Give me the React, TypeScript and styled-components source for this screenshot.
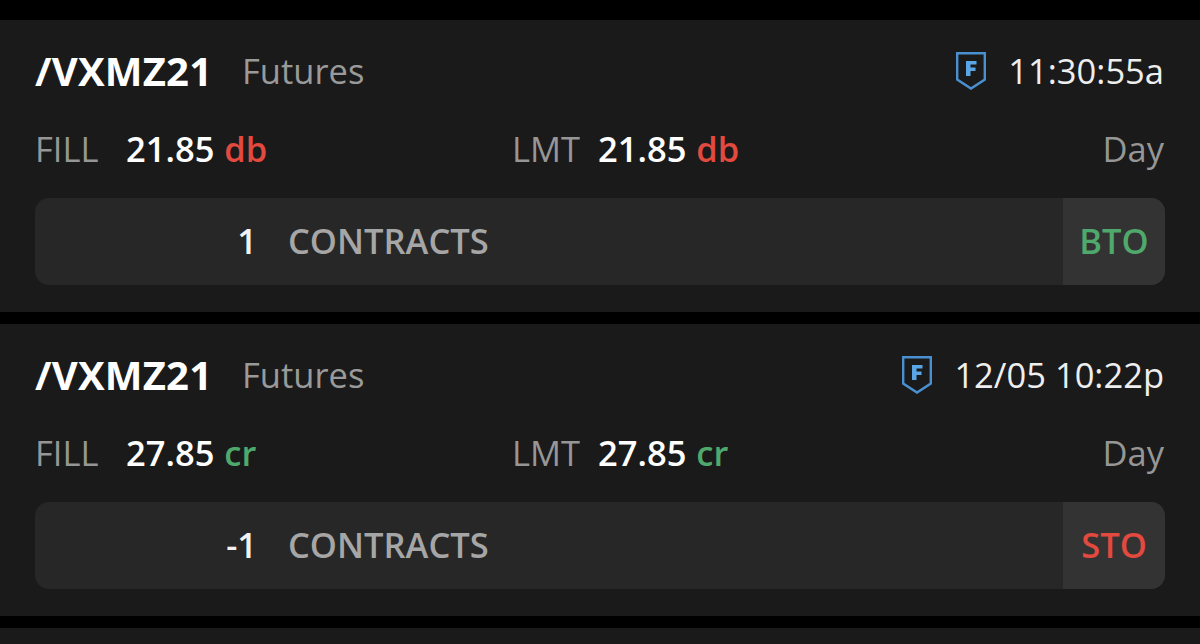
import styled, { createGlobalStyle } from "styled-components";

const Global = createGlobalStyle`
  html, body {
    margin: 0;
    padding: 0;
    background: #000;
    height: 644px;
    overflow: hidden;
  }
`;

const List = styled.div`
  height: 644px;
  box-sizing: border-box;
  overflow: hidden;
  display: flex;
  flex-direction: column;
  gap: 12px;
  padding-top: 20px;
  font-family: "Open Sans", sans-serif;
`;

const Card = styled.section`
  flex: none;
  height: 292px;
  box-sizing: border-box;
  background: #1a1a1a;
  padding: 0 35px;
`;

const Header = styled.div`
  height: 100px;
  display: flex;
  align-items: center;
`;

const Symbol = styled.span`
  font-size: 40px;
  font-weight: 700;
  color: #fff;
  letter-spacing: 0.2px;
  width: 207px;
`;

const Kind = styled.span`
  font-size: 34.5px;
  color: #9a9a9a;
`;

const Time = styled.div`
  margin-left: auto;
  margin-right: 1px;
  display: flex;
  align-items: center;
  gap: 22px;
  font-size: 34.5px;
  color: #eee;

  svg {
    margin-top: 2px;
  }
`;

const Prices = styled.div`
  height: 56px;
  padding-right: 1px;
  display: grid;
  grid-template-columns: 477px 1fr auto;
  align-items: center;
  font-size: 34.5px;
  color: #969696;
`;

const Price = styled.div`
  display: flex;
  align-items: baseline;
`;

const PriceLabel = styled.span<{ $width: number }>`
  width: ${(p) => p.$width}px;
`;

const Value = styled.span`
  color: #fff;
  font-weight: 600;
  font-size: 34.5px;
  margin-right: 10px;
`;

const Unit = styled.span<{ $color: string }>`
  color: ${(p) => p.$color};
  font-weight: 600;
  font-size: 34.5px;
`;

const Pill = styled.div`
  margin-top: 22px;
  height: 87px;
  display: flex;
  align-items: center;
  background: #272727;
  border-radius: 14px;
  overflow: hidden;
`;

const Count = styled.span`
  width: 222px;
  padding-bottom: 2px;
  text-align: right;
  font-size: 34.5px;
  font-weight: 600;
  color: #f2f2f2;
`;

const Unitless = styled.span`
  margin-left: 31px;
  padding-bottom: 2px;
  font-size: 34.5px;
  font-weight: 600;
  color: #a6a6a6;
`;

const Badge = styled.div<{ $color: string }>`
  margin-left: auto;
  width: 102px;
  height: 100%;
  box-sizing: border-box;
  padding-bottom: 2px;
  display: flex;
  align-items: center;
  justify-content: center;
  background: #333;
  font-size: 34.5px;
  font-weight: 600;
  color: ${(p) => p.$color};
`;

const RED = "#e2493f";
const GREEN = "#4fa86c";

const ShieldIcon = () => (
  <svg width="30" height="38" viewBox="0 0 30 38" fill="none">
    <path d="M1.200 1.200H28.800V27.500L15 36.500L1.200 27.500Z" stroke="#4a90d0" strokeWidth="2.400" />
    <path d="M10 9H20.500V12.500H14.500V15.500H19.500V19H14.500V24H10Z" fill="#5aa5e6" />
  </svg>
);

type Order = {
  time: string;
  price: string;
  unit: string;
  unitColor: string;
  count: string;
  action: string;
  actionColor: string;
};

const orders: Order[] = [
  { time: "11:30:55a", price: "21.85", unit: "db", unitColor: RED, count: "1", action: "BTO", actionColor: GREEN },
  { time: "12/05 10:22p", price: "27.85", unit: "cr", unitColor: GREEN, count: "-1", action: "STO", actionColor: RED },
];

export default function App() {
  return (
    <List>
      <Global />
      {orders.map((o) => (
        <Card key={o.time}>
          <Header>
            <Symbol>/VXMZ21</Symbol>
            <Kind>Futures</Kind>
            <Time>
              <ShieldIcon />
              {o.time}
            </Time>
          </Header>
          <Prices>
            <Price>
              <PriceLabel $width={91}>FILL</PriceLabel>
              <Value>{o.price}</Value>
              <Unit $color={o.unitColor}>{o.unit}</Unit>
            </Price>
            <Price>
              <PriceLabel $width={86}>LMT</PriceLabel>
              <Value>{o.price}</Value>
              <Unit $color={o.unitColor}>{o.unit}</Unit>
            </Price>
            <span>Day</span>
          </Prices>
          <Pill>
            <Count>{o.count}</Count>
            <Unitless>CONTRACTS</Unitless>
            <Badge $color={o.actionColor}>{o.action}</Badge>
          </Pill>
        </Card>
      ))}
      <Card />
    </List>
  );
}
